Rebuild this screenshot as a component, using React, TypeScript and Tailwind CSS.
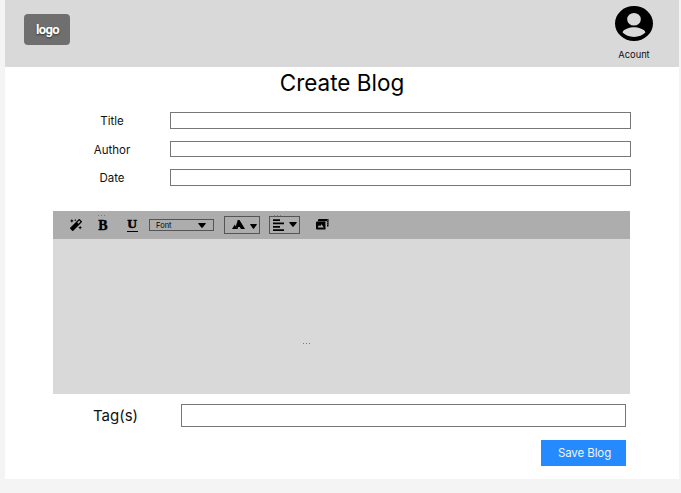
import React from "react";
import { FaMagic } from "react-icons/fa";

function Dots({ className = "" }: { className?: string }) {
  return (
    <svg className={className} width="9" height="2" viewBox="0 0 9 2" fill="#777">
      <rect x="1" y="0" width="1" height="1" />
      <rect x="4" y="0" width="1" height="1" />
      <rect x="7" y="0" width="1" height="1" />
    </svg>
  );
}

function Caret({ className = "" }: { className?: string }) {
  return (
    <svg className={className} viewBox="0 0 10 6" preserveAspectRatio="none">
      <path d="M1 0h8q1.200 0 .6 1L5.800 5.500q-.8.8-1.600 0L.4 1Q-.2 0 1 0z" />
    </svg>
  );
}

function Field({ label, className }: { label: string; className: string }) {
  return (
    <label className="flex h-[17px] items-center">
      <span className="mr-px w-[114px] pt-[2px] text-center text-[11.500px] leading-[17px]">{label}</span>
      <input className={"w-[461px] border border-[#777] bg-white outline-none " + className} />
    </label>
  );
}

export default function App() {
  return (
    <div className="h-[493px] w-[681px] overflow-hidden bg-[#f4f4f4] pl-[5px] font-['Inter',sans-serif] text-[#111]">
      <div className="flex h-[479px] w-[674px] flex-col bg-white">
        <header className="flex h-[67px] shrink-0 items-start justify-between bg-[#d9d9d9] pl-[19px] pr-[24px]">
          <div className="mt-[14px] flex h-[31px] w-[46px] items-center justify-center rounded-[4px] bg-[#6f6f6f] pl-px font-['Roboto',sans-serif] text-[13px] font-bold tracking-[-0.600px] text-white [text-shadow:0_1px_2px_#333]">
            logo
          </div>
          <div className="mt-[6px] flex w-[42px] flex-col items-center">
            <svg width="38" height="35" viewBox="2 2 20 20" preserveAspectRatio="none">
              <path d="M12 2a10 10 0 1 0 0 20 10 10 0 0 0 0-20zm0 4a3.600 3.600 0 1 1 0 7.200A3.600 3.600 0 0 1 12 6zm0 13.700c-2.500 0-4.600-.9-6-2.500 0-2 4-3.100 6-3.100s6 1.100 6 3.100c-1.400 1.600-3.500 2.500-6 2.500z" />
            </svg>
            <span className="mt-[8px] text-[9.300px] leading-[12px]">Acount</span>
          </div>
        </header>

        <h1 className="h-[45px] text-center text-[22.500px] leading-[32px] text-black">Create Blog</h1>

        <form className="flex flex-col">
          <div className="flex flex-col gap-[11.500px] pl-[50px]">
            <Field label="Title" className="h-[17px]" />
            <Field label="Author" className="h-[16px]" />
            <Field label="Date" className="h-[17px]" />
          </div>

          <section className="ml-[48px] mt-[25px] w-[577px]">
            <div className="flex h-[28px] items-center bg-[#adadad] pl-[17px] text-black">
              <FaMagic className="h-[12px] w-[12px]" />
              <div className="relative ml-[15px] h-[16px] w-[12px]">
                <span className="block text-center font-['Liberation_Serif',serif] text-[14px] font-bold leading-[18px] [-webkit-text-stroke:0.4px_black]">B</span>
                <Dots className="absolute -top-[2px] left-0" />
              </div>
              <div className="ml-[17px] flex h-[13px] w-[12px] flex-col items-center justify-between">
                <span className="font-['Liberation_Serif',serif] text-[13.500px] font-bold leading-[9px] [-webkit-text-stroke:0.5px_black]">U</span>
                <span className="h-px w-[11px] bg-black" />
              </div>
              <div className="ml-[11px] flex h-[12px] w-[65px] items-center justify-between border border-[#555] pl-[6px] pr-[7px]">
                <span className="pt-px text-[7.500px] leading-[10px]">Font</span>
                <Caret className="h-[5px] w-[8px]" />
              </div>
              <div className="ml-[10px] flex h-[18px] w-[36px] items-center border border-[#555] pl-[7px]">
                <svg className="-mt-px" width="14" height="10" viewBox="0 0 14 10">
                  <path d="M5.500 0h2L13 9H9L6.800 5.500 5.500 9H3.800L5.500 4zM0 9l2.800-4.500L4.800 9zM5.500 1l3.500 6H3.500z" />
                </svg>
                <Caret className="ml-[4px] mt-[2px] h-[5px] w-[7px]" />
              </div>
              <div className="relative ml-[9px] flex h-[18px] w-[31px] items-center border border-[#555] pl-[3px]">
                <svg width="12" height="12" viewBox="0 0 12 12">
                  <path d="M0 .3h7v1.700H0zM0 3.600h11v1.700H0zM0 7h7v1.700H0zM0 10.200h11v1.700H0z" />
                </svg>
                <Caret className="-mt-px ml-[4px] h-[5px] w-[8px]" />
                <Dots className="absolute -top-[2px] left-[3px]" />
              </div>
              <svg className="-mt-px ml-[16px]" width="13" height="11" viewBox="0 0 13 11">
                <path d="M3 0h9.500v7.500H11V2.200H2V1q0-1 1-1z" />
                <path fillRule="evenodd" d="M1 2.500h8.500v8H1q-1 0-1-1v-6q0-1 1-1zm.6 6h6.200L5.500 5.300 4.200 7.200 3 6.300z" />
                <path d="M9.900 2.200v5.300M11.500.7v6" stroke="#adadad" strokeWidth=".6" strokeDasharray="1 1" />
              </svg>
            </div>
            <div className="relative h-[155px] bg-[#d9d9d9]">
              <Dots className="absolute left-[249px] top-[104px]" />
            </div>
          </section>

          <label className="ml-[48px] mt-[10px] flex h-[23px] items-center">
            <span className="w-[128px] pl-[40px] text-[15px] leading-[23px]">Tag(s)</span>
            <input className="h-[23px] w-[445px] border border-[#777] bg-white outline-none" />
          </label>
          <button type="button" className="ml-[536px] mt-[13px] h-[26px] w-[85px] bg-[#268aff] pl-[2px] text-[11.500px] leading-[26px] tracking-[-0.1px] text-[#edf5ff]">
            Save Blog
          </button>
        </form>
      </div>
    </div>
  );
}
